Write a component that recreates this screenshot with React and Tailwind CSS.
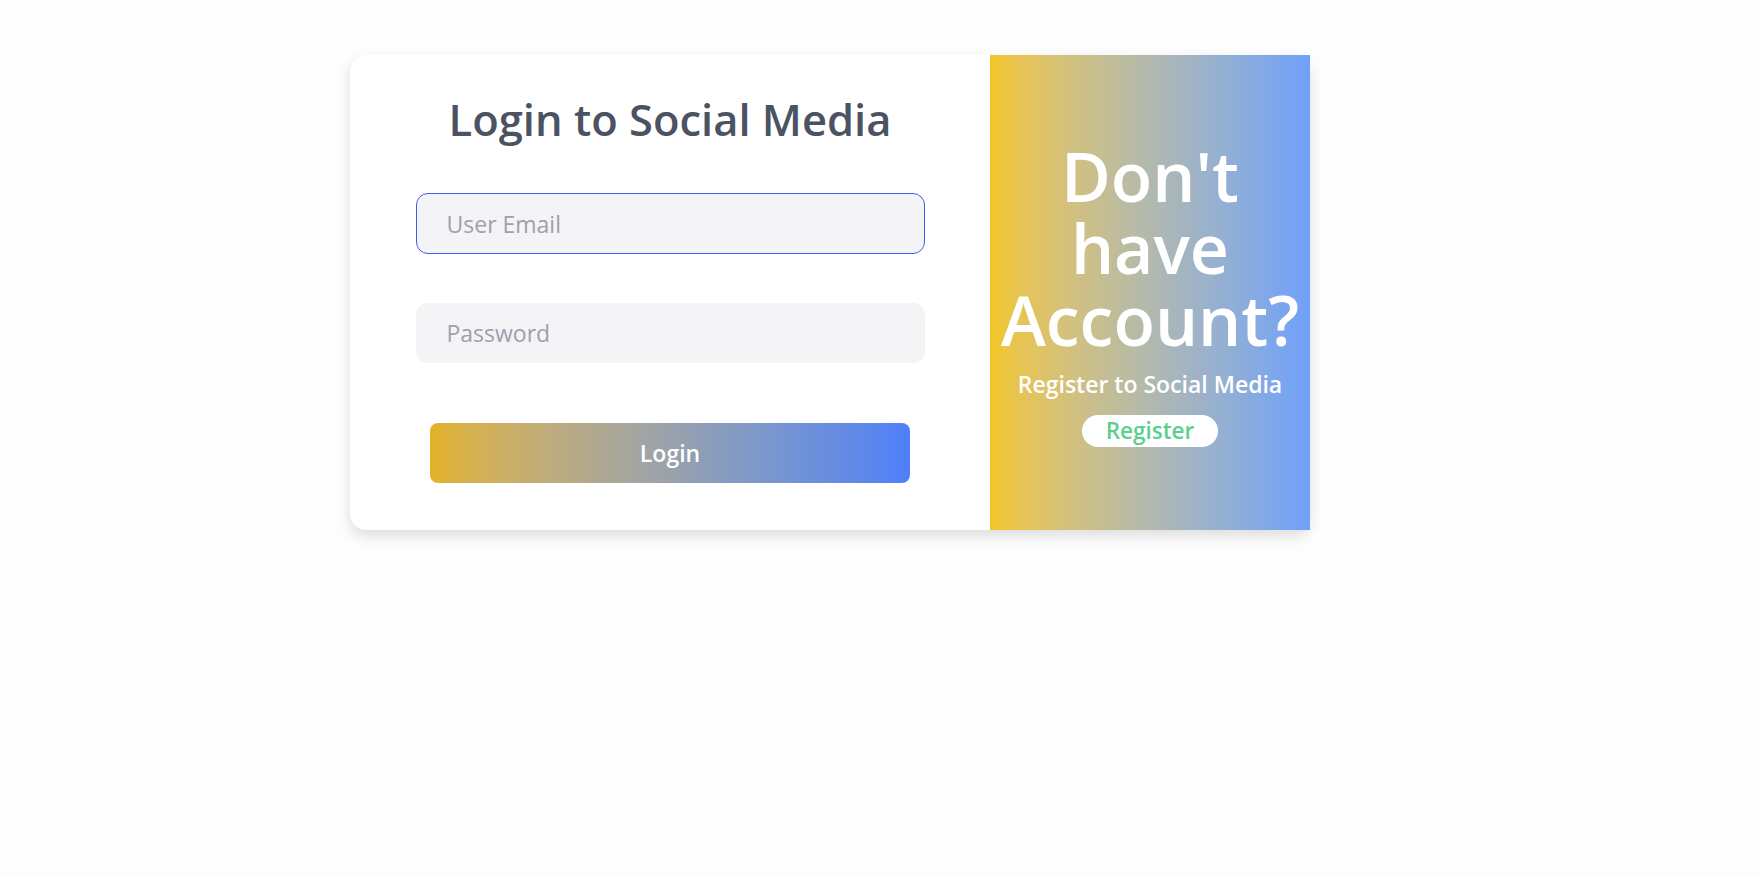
export default function App() {
  return (
    <div
      className="min-h-screen w-full bg-[#fdfdfd] pt-[55px] pl-[350px]"
      style={{ fontFamily: '"Open Sans", "Noto Sans", sans-serif' }}
    >
      <div className="flex h-[475px] w-[960px] rounded-2xl bg-white shadow-[0_6px_14px_rgba(0,0,0,0.13)]">
        <div className="flex w-[640px] flex-col items-center pt-[39px]">
          <h1 className="text-[43.5px] font-semibold leading-[1.2] text-[#4b5262]">
            Login to Social Media
          </h1>
          <input
            type="email"
            placeholder="User Email"
            autoFocus
            className="mt-[47px] h-[61px] w-[509px] rounded-xl border border-[#3f5cf0] bg-[#f4f3f6] px-[30px] text-[23px] text-[#4b5262] outline-none placeholder:text-[#9fa0ab]"
          />
          <input
            type="password"
            placeholder="Password"
            className="mt-[49px] h-[60px] w-[509px] rounded-xl border border-transparent bg-[#f4f3f6] px-[30px] text-[23px] text-[#4b5262] outline-none placeholder:text-[#9fa0ab]"
          />
          <button className="mt-[60px] h-[60px] w-[480px] rounded-lg bg-linear-to-r from-[#e3b324] to-[#4f7ff8] text-[23px] font-semibold text-white">
            Login
          </button>
        </div>
        <div className="flex w-[320px] flex-col items-center justify-center bg-linear-to-r from-[#f3c623] to-[#6fa0fa] pt-[2px] text-center text-white">
          <h2 className="text-[68px] font-semibold leading-[72px]">
            Don't
            <br />
            have
            <br />
            Account?
          </h2>
          <p className="mt-[12px] text-[23px] font-semibold leading-[32px]">
            Register to Social Media
          </p>
          <button className="mt-[15px] h-[32px] w-[136px] rounded-full bg-white text-[22.5px] font-semibold leading-[32px] text-[#5ccf8f]">
            Register
          </button>
        </div>
      </div>
    </div>
  );
}
